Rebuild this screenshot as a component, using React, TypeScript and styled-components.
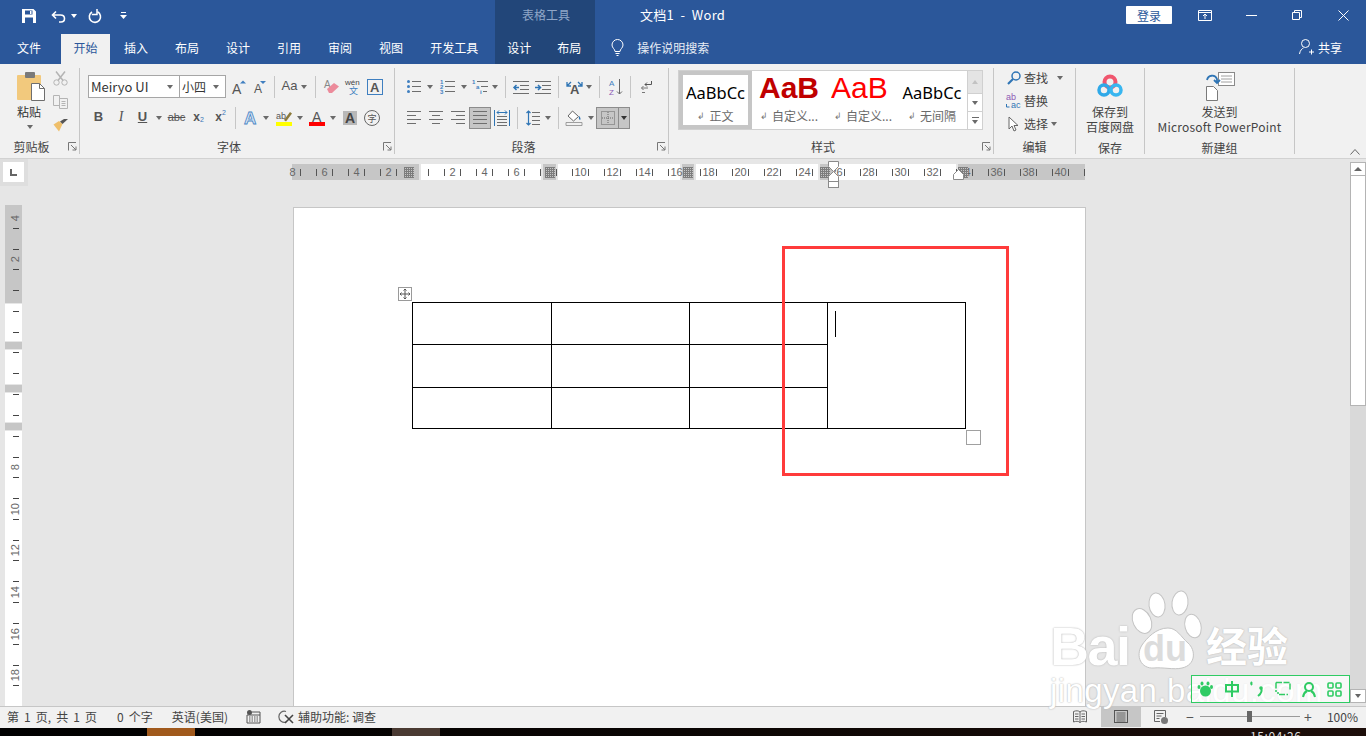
import React from "react"
import styled, { createGlobalStyle } from "styled-components"

const GlobalStyle = createGlobalStyle`
	html, body { margin: 0; padding: 0; background: #e6e6e6; overflow: hidden; }
	* { box-sizing: border-box; }
`

const Shell = styled.div`
	position: relative;
	width: 1366px;
	height: 736px;
	overflow: hidden;
	display: flex;
	flex-direction: column;
	font-family: "Noto Sans CJK SC", "Noto Sans", sans-serif;
	font-size: 12px;
	color: #444;
`

/* ---- title bar + tabs ---- */
const TitleBar = styled.div`
	display: flex;
	align-items: stretch;
	height: 34px;
	background: #2b579a;
	color: #fff;
`
const Qat = styled.div`
	width: 495px;
	display: flex;
	align-items: center;
	padding: 0 0 2px 22px;
`
const ContextTitle = styled.div`
	width: 100px;
	background: #224679;
	color: #8fa6c8;
	display: flex;
	align-items: center;
	justify-content: center;
	padding: 0 0 6px 2px;
`
const DocTitle = styled.div`
	margin-left: 45px;
	display: flex;
	align-items: center;
	padding-bottom: 6px;
	white-space: pre;
	font-size: 13px;
	letter-spacing: 0.3px;
`
const WindowControls = styled.div`
	margin-left: auto;
	display: flex;
	align-items: center;
	padding: 0 17px 4px 0;
`
const SignIn = styled.div`
	width: 46px;
	height: 18px;
	background: #fff;
	color: #2b579a;
	border-radius: 1px;
	display: flex;
	align-items: center;
	justify-content: center;
	margin-right: 26px;
`
const TabBar = styled.div`
	display: flex;
	align-items: stretch;
	height: 30px;
	background: #2b579a;
	color: #fff;
	padding-left: 4px;
`
const Tab = styled.div<{ $active?: boolean; $ml?: number; $pad?: number }>`
	display: flex;
	align-items: center;
	padding: 0 ${p => p.$pad ?? 13}px 4px;
	margin-left: ${p => p.$ml ?? 1}px;
	background: ${p => (p.$active ? "#f1f1f1" : "transparent")};
	color: ${p => (p.$active ? "#2b579a" : "#fff")};
`
const ContextTabs = styled.div`
	display: flex;
	width: 100px;
	margin-left: 4px;
	background: #224679;
`
const TellMe = styled.div`
	display: flex;
	align-items: center;
	margin-left: 16px;
	padding-bottom: 4px;
	gap: 13px;
	color: #e8edf5;
`
const Share = styled.div`
	margin-left: auto;
	display: flex;
	align-items: center;
	gap: 4px;
	padding: 0 24px 4px 0;
`

/* ---- ribbon ---- */
const Ribbon = styled.div`
	display: flex;
	height: 95px;
	background: #f1f1f1;
	border-bottom: 1px solid #d2d2d2;
`
const Group = styled.div<{ $w: number }>`
	width: ${p => p.$w}px;
	flex: none;
	display: flex;
	flex-direction: column;
`
const GroupBody = styled.div<{ $pt: number; $pl: number }>`
	flex: 1;
	min-height: 0;
	padding: ${p => p.$pt}px 0 0 ${p => p.$pl}px;
`
const GroupFoot = styled.div`
	display: flex;
	align-items: center;
	height: 20px;
	margin-bottom: 2px;
	flex: none;
`
const GroupLabel = styled.div`
	flex: 1;
	text-align: center;
	color: #444;
`
const Divider = styled.div`
	width: 1px;
	flex: none;
	margin: 4px 0;
	background: #c6c6c6;
`
const ToolRows = styled.div`
	display: flex;
	flex-direction: column;
	gap: 8px;
`
const ToolRow = styled.div`
	display: flex;
	align-items: center;
	height: 23px;
`
const Slot = styled.span<{ $ml?: number; $w?: number }>`
	display: inline-flex;
	align-items: center;
	justify-content: center;
	flex: none;
	margin-left: ${p => p.$ml ?? 0}px;
	${p => (p.$w ? `width: ${p.$w}px;` : "")}
`
const Arrow = styled.span<{ $ml?: number; $c?: string }>`
	flex: none;
	width: 0;
	height: 0;
	margin-left: ${p => p.$ml ?? 0}px;
	border-left: 3.5px solid transparent;
	border-right: 3.5px solid transparent;
	border-top: 4px solid ${p => p.$c ?? "#6a6a6a"};
`
const ToolSep = styled.span<{ $ml: number }>`
	flex: none;
	width: 1px;
	height: 22px;
	margin-left: ${p => p.$ml}px;
	background: #c6c6c6;
`
const Combo = styled.div<{ $w: number; $size?: number }>`
	width: ${p => p.$w}px;
	height: 23px;
	flex: none;
	display: flex;
	align-items: center;
	justify-content: space-between;
	background: #fff;
	border: 1px solid #a6a6a6;
	padding: 0 6px 0 2px;
	font-size: ${p => p.$size ?? 13}px;
	color: #333;
	& + & { margin-left: -1px; }
`
const ClipColumns = styled.div`
	display: flex;
`
const PasteCol = styled.div`
	width: 36px;
	display: flex;
	flex-direction: column;
	align-items: flex-start;
	color: #333;
`
const PasteText = styled.div`
	margin-top: 2px;
	line-height: 17px;
`
const PasteArrow = styled(Arrow)`
	margin: 5px 0 0 10px;
`
const ClipTools = styled.div`
	display: flex;
	flex-direction: column;
	gap: 9px;
`
const LetterTool = styled(Slot)<{ $font?: string; $size?: number; $bold?: boolean; $italic?: boolean; $under?: boolean; $strike?: boolean }>`
	font-family: ${p => p.$font ?? '"Liberation Sans"'}, sans-serif;
	font-size: ${p => p.$size ?? 13}px;
	font-weight: ${p => (p.$bold ? 700 : 400)};
	font-style: ${p => (p.$italic ? "italic" : "normal")};
	text-decoration: ${p => (p.$under ? "underline" : p.$strike ? "line-through" : "none")};
	color: #555;
	line-height: 14px;
	padding-bottom: 1px;
`
const Sub = styled.span<{ $sup?: boolean }>`
	font-size: 7px;
	font-weight: 400;
	color: #3b78b8;
	position: relative;
	top: ${p => (p.$sup ? -4 : 3)}px;
`
const PressedBox = styled(Slot)`
	height: 22px;
	background: #c6c6c6;
	border: 1px solid #8c8c8c;
`

/* styles gallery */
const Gallery = styled.div`
	display: flex;
	width: 305px;
	height: 60px;
	background: #fff;
	border: 1px solid #d0d0d0;
`
const StyleCard = styled.div<{ $selected?: boolean; $w: number }>`
	width: ${p => p.$w}px;
	flex: none;
	overflow: hidden;
	display: flex;
	flex-direction: column;
	align-items: center;
	border: ${p => (p.$selected ? "4px solid #c6c6c6" : "0")};
	padding-top: ${p => (p.$selected ? 1 : 5)}px;
`
const StylePreview = styled.div<{ $size: number; $color?: string; $bold?: boolean; $font?: string; $lift?: number }>`
	height: 32px;
	flex: none;
	display: flex;
	align-items: center;
	padding-bottom: ${p => p.$lift ?? 0}px;
	font-family: ${p => p.$font ?? '"Noto Sans"'}, sans-serif;
	font-size: ${p => p.$size}px;
	font-weight: ${p => (p.$bold ? 700 : 400)};
	color: ${p => p.$color ?? "#000"};
	white-space: nowrap;
`
const ClippedPreview = styled(StylePreview)`
	width: 58px;
	margin-left: -6px;
	overflow: hidden;
`
const StyleName = styled.div`
	height: 14px;
	flex: none;
	display: flex;
	align-items: center;
	gap: 4px;
	color: #6a6a6a;
	white-space: nowrap;
`
const ReturnMark = styled.span`
	font-size: 9px;
	color: #777;
`
const GalleryScroll = styled.div`
	width: 15px;
	flex: none;
	margin-left: auto;
	display: flex;
	flex-direction: column;
	border-left: 1px solid #d0d0d0;
`
const GalleryBtn = styled.div<{ $h: number; $off?: boolean }>`
	height: ${p => p.$h}px;
	display: flex;
	flex-direction: column;
	align-items: center;
	justify-content: center;
	gap: 2px;
	background: ${p => (p.$off ? "#e4e4e4" : "#fff")};
	& + & { border-top: 1px solid #d0d0d0; }
`
const UpArrow = styled.span<{ $c?: string; $w?: number }>`
	width: 0;
	height: 0;
	border-left: ${p => p.$w ?? 3.5}px solid transparent;
	border-right: ${p => p.$w ?? 3.5}px solid transparent;
	border-bottom: 4px solid ${p => p.$c ?? "#c2c2c2"};
`
const Dash = styled.span`
	width: 7px;
	height: 1px;
	background: #6a6a6a;
`

/* editing + big buttons */
const EditRow = styled.div`
	display: flex;
	align-items: center;
	height: 23px;
	color: #444;
`
const EditText = styled.span`
	margin-left: 3px;
`
const BigButton = styled.div<{ $mt: number; $iconGap: number }>`
	display: flex;
	flex-direction: column;
	align-items: center;
	padding-top: ${p => p.$mt}px;
	line-height: 15px;
	color: #444;
	& > svg { margin-bottom: ${p => p.$iconGap}px; }
`
const PptName = styled.span`
	letter-spacing: 0.2px;
	white-space: nowrap;
`
const Collapse = styled.div`
	flex: 1;
	display: flex;
	justify-content: flex-end;
	align-items: flex-end;
	padding: 0 6px 3px 0;
`

/* ---- workspace ---- */
const Workspace = styled.div`
	flex: 1;
	min-height: 0;
	display: flex;
	background: #e6e6e6;
`
const WorkMain = styled.div`
	width: 1350px;
	display: flex;
	flex-direction: column;
`
const RulerBar = styled.div`
	height: 48px;
	flex: none;
	display: flex;
	align-items: flex-start;
	position: relative;
	z-index: 1;
`
const TabStop = styled.div`
	width: 28px;
	height: 27px;
	background: #dedede;
	padding: 3px 4px 4px 3px;
`
const TabStopFace = styled.div`
	height: 100%;
	background: #fff;
	display: flex;
	align-items: center;
	justify-content: center;
`
const HRuler = styled.div`
	position: relative;
	width: 793px;
	height: 16px;
	margin: 5px 0 0 264px;
	display: flex;
	gap: 2px;
`
const RulerSeg = styled.div<{ $size: number; $dark?: boolean; $justify?: string }>`
	width: ${p => p.$size}px;
	flex: none;
	display: flex;
	align-items: center;
	justify-content: ${p => p.$justify ?? "center"};
	background: ${p => (p.$dark ? "#c6c6c6" : "#fff")};
`
const Stipple = styled.span`
	position: relative;
	z-index: 2;
	width: 10px;
	height: 11px;
	background-color: #c6c6c6;
	background-image: linear-gradient(#7d7d7d 1px, transparent 1px), linear-gradient(90deg, #7d7d7d 1px, transparent 1px);
	background-size: 2px 2px;
`
const HMarks = styled.div`
	position: absolute;
	left: -16px;
	top: 0;
	height: 16px;
	display: flex;
`
const HCell = styled.div`
	width: 32px;
	flex: none;
	display: grid;
	grid-template-columns: 8px 1px 1fr 1px 7px;
	align-items: center;
	font-family: "Liberation Sans", sans-serif;
	font-size: 11px;
	color: #666;
	text-align: center;
`
const HTick = styled.span<{ $off?: boolean }>`
	height: 7px;
	background: ${p => (p.$off ? "transparent" : "#555")};
`
const IndentMarker = styled.svg`
	position: absolute;
	top: -3px;
	z-index: 3;
`
const DocRow = styled.div`
	flex: 1;
	min-height: 0;
	display: flex;
`
const VRuler = styled.div`
	position: relative;
	width: 17px;
	margin: -2px 0 0 5px;
	flex: none;
	overflow: hidden;
	display: flex;
	flex-direction: column;
	gap: 1px;
`
const VSeg = styled.div<{ $size: number; $dark?: boolean }>`
	height: ${p => p.$size}px;
	flex: none;
	background: ${p => (p.$dark ? "#c6c6c6" : "#fff")};
`
const VMarks = styled.div`
	position: absolute;
	top: -8px;
	left: 0;
	width: 17px;
`
const VCell = styled.div`
	height: 41.6px;
	display: flex;
	flex-direction: column;
	align-items: center;
	justify-content: space-between;
	padding: 10px 0 10px 4px;
	font-family: "Liberation Sans", sans-serif;
	font-size: 11px;
	color: #666;
`
const VTick = styled.span<{ $off?: boolean }>`
	width: 6px;
	height: 1px;
	background: ${p => (p.$off ? "transparent" : "#444")};
`
const VLabel = styled.span`
	writing-mode: vertical-rl;
	transform: rotate(180deg);
	line-height: 11px;
	margin-left: -1px;
`
const Page = styled.div`
	position: relative;
	width: 793px;
	margin-left: 271px;
	background: #fff;
	border: 1px solid #c6c6c6;
	border-bottom: 0;
	padding: 94px 0 0 118px;
`
const TableWrap = styled.div`
	position: relative;
	width: 554px;
`
const Grid = styled.table`
	border-collapse: collapse;
	table-layout: fixed;
	width: 553px;
`
const GridCell = styled.td<{ $w: number }>`
	width: ${p => p.$w}px;
	border: 1px solid #000;
	padding: 8px 0 0 7px;
	vertical-align: top;
`
const GridRow = styled.tr<{ $h: number }>`
	height: ${p => p.$h}px;
`
const TextCaret = styled.div`
	width: 1px;
	height: 26px;
	background: #000;
`
const MoveHandle = styled.div`
	position: absolute;
	left: -14px;
	top: -15px;
	width: 14px;
	height: 14px;
	border: 1px solid #9a9a9a;
	background: #fff;
	display: flex;
	align-items: center;
	justify-content: center;
`
const ResizeHandle = styled.div`
	position: absolute;
	left: 554px;
	top: 128px;
	width: 15px;
	height: 15px;
	border: 1px solid #a0a0a0;
	background: #fff;
`
const Highlight = styled.div`
	position: absolute;
	left: 488px;
	top: 38px;
	width: 227px;
	height: 230px;
	border: 3px solid #ff3b3b;
`
const ScrollCol = styled.div`
	width: 16px;
	flex: none;
	display: flex;
	flex-direction: column;
	padding-top: 3px;
`
const ScrollBtn = styled.div`
	height: 14px;
	flex: none;
	background: #fff;
	border: 1px solid #b4b4b4;
	display: flex;
	align-items: center;
	justify-content: center;
`
const ScrollThumb = styled.div`
	height: 230px;
	flex: none;
	background: #fff;
	border: 1px solid #b4b4b4;
	border-top: 0;
`
const ScrollTrack = styled.div`
	flex: 1;
	background: #d9d9d9;
`
const ScrollDown = styled(ScrollBtn)`
	margin-bottom: 3px;
	height: 14px;
`
const DownArrow = styled(Arrow)`
	border-top-color: #666;
`

/* ---- status + taskbar ---- */
const StatusBar = styled.div`
	height: 22px;
	flex: none;
	display: flex;
	align-items: center;
	background: #f1f1f1;
	border-top: 1px solid #c6c6c6;
	padding: 0 0 2px 7px;
	color: #444;
`
const StatusItem = styled.span<{ $ml?: number; $spread?: boolean }>`
	display: inline-flex;
	align-items: center;
	margin-left: ${p => p.$ml ?? 0}px;
	white-space: pre;
	word-spacing: ${p => (p.$spread ? 2.4 : 0)}px;
`
const StatusRight = styled.div`
	margin-left: auto;
	height: 100%;
	display: flex;
	align-items: center;
	padding-right: 8px;
`
const ViewBtn = styled.div<{ $active?: boolean; $ml?: number }>`
	width: 40px;
	height: calc(100% + 2px);
	margin-left: ${p => p.$ml ?? 0}px;
	display: flex;
	align-items: center;
	justify-content: center;
	background: ${p => (p.$active ? "#c6c6c6" : "transparent")};
`
const ZoomTrack = styled.div`
	width: 100px;
	height: 1px;
	margin: 0 4px 0 6px;
	background: #9a9a9a;
	display: flex;
	align-items: center;
	justify-content: center;
`
const ZoomThumb = styled.div`
	width: 5px;
	height: 11px;
	background: #666;
`
const ZoomSign = styled.span`
	font-size: 14px;
	line-height: 14px;
	color: #555;
	width: 8px;
	text-align: center;
`
const ZoomPct = styled.span`
	margin-left: 15px;
`
const TaskBar = styled.div`
	height: 8px;
	flex: none;
	display: flex;
	overflow: hidden;
	background: linear-gradient(90deg, #000 0%, #0a0503 50%, #1d0e0a 100%);
`
const TaskApp = styled.div<{ $ml: number; $bg: string }>`
	width: 48px;
	margin-left: ${p => p.$ml}px;
	background: ${p => p.$bg};
`
const Clock = styled.div`
	margin-left: 810px;
	padding-top: 1px;
	line-height: 14px;
	color: #ddd;
	letter-spacing: 0.6px;
`

/* ---- overlays ---- */
const Watermark = styled.div`
	position: absolute;
	left: 1050px;
	top: 588px;
	width: 246px;
	color: #fff;
	font-family: "Liberation Sans", sans-serif;
	text-shadow: 0 0 2px #b9b9b9, 0 0 1px #c9c9c9;
	pointer-events: none;
`
const MarkTop = styled.div`
	display: flex;
	align-items: flex-end;
	height: 84px;
`
const MarkBai = styled.span`
	font-size: 54px;
	font-weight: 700;
	line-height: 60px;
	width: 80px;
	letter-spacing: -1.5px;
	margin-bottom: -4px;
`
const MarkPaw = styled.div`
	position: relative;
	width: 76px;
	height: 84px;
	flex: none;
`
const MarkDu = styled.span`
	position: absolute;
	left: 13px;
	bottom: 3px;
	font-size: 36px;
	font-weight: 700;
	line-height: 40px;
	color: #dcdcdc;
	text-shadow: none;
`
const MarkCn = styled.span`
	font-family: "Noto Sans CJK SC", sans-serif;
	font-size: 41px;
	font-weight: 700;
	line-height: 56px;
	white-space: nowrap;
`
const MarkUrl = styled.div`
	font-size: 33px;
	line-height: 36px;
	margin-top: 1px;
	white-space: nowrap;
	letter-spacing: 0.4px;
`
const ImeBar = styled.div`
	position: absolute;
	left: 1191px;
	top: 675px;
	width: 159px;
	height: 28px;
	background: rgba(255, 255, 255, 0.72);
	border: 1px solid #2fcb63;
	display: flex;
	align-items: center;
	padding-left: 5px;
`

const Svg = styled.svg`
	display: block;
	flex: none;
	overflow: visible;
`

type IcoProps = { w: number; h: number; children: React.ReactNode }
const Ico = ({ w, h, children }: IcoProps) => (
	<Svg width={w} height={h} viewBox={`0 0 ${w} ${h}`} fill="none">{children}</Svg>
)

const Launcher = () => (
	<Slot $ml={5}>
		<Ico w={11} h={9}>
			<path d="M.5 8.5V.5H8M3 3l5 5M8 4.5V8H4.500" stroke="#777" />
		</Ico>
	</Slot>
)

const LineIcon = ({ rows, w = 14 }: { rows: [number, number][]; w?: number }) => (
	<Ico w={w} h={rows.length * 4}>
		{rows.map(([x, len], i) => <rect key={i} x={x} y={i * 4 + 1} width={len} height={1} fill="#6e6e6e" />)}
	</Ico>
)

const AlignLeft = () => <LineIcon rows={[[0, 14], [0, 9], [0, 14], [0, 9]]} />
const AlignCenter = () => <LineIcon rows={[[0, 14], [3, 8], [0, 14], [3, 8]]} />
const AlignRight = () => <LineIcon rows={[[0, 14], [5, 9], [0, 14], [5, 9]]} />
const AlignJustify = () => <LineIcon rows={[[0, 14], [0, 14], [0, 14], [0, 14]]} />

const Bullets = () => (
	<Ico w={14} h={14}>
		{[1, 6, 11].map(y => <React.Fragment key={y}><circle cx={1.500} cy={y + .5} r={1.500} fill="#3f7fc0" /><rect x={5} y={y} width={9} height={1} fill="#6e6e6e" /></React.Fragment>)}
	</Ico>
)
const Numbers = () => (
	<Ico w={15} h={15}>
		{[0, 5, 10].map((y, i) => <React.Fragment key={y}><text x={0} y={y + 5} fontSize={6} fontWeight={700} fontFamily="Liberation Sans" fill="#3f7fc0">{i + 1}</text><rect x={5} y={y + 2} width={10} height={1} fill="#6e6e6e" /></React.Fragment>)}
	</Ico>
)
const MultiList = () => (
	<Ico w={16} h={15}>
		<text x={0} y={5} fontSize={6} fontWeight={700} fontFamily="Liberation Sans" fill="#3f7fc0">1</text>
		<rect x={5} y={2} width={11} height={1} fill="#6e6e6e" />
		<text x={4} y={10} fontSize={6} fontWeight={700} fontFamily="Liberation Sans" fill="#3f7fc0">a</text>
		<rect x={9} y={7} width={7} height={1} fill="#6e6e6e" />
		<text x={8} y={15} fontSize={6} fontWeight={700} fontFamily="Liberation Sans" fill="#3f7fc0">i</text>
		<rect x={11} y={12} width={4} height={1} fill="#6e6e6e" />
	</Ico>
)
const Indent = ({ out }: { out?: boolean }) => (
	<Ico w={16} h={14}>
		{[1, 5, 9, 13].map((y, i) => <rect key={y} x={i === 1 || i === 2 ? 7 : 0} y={y} width={i === 1 || i === 2 ? 9 : 16} height={1} fill="#6e6e6e" />)}
		<path d={out ? "M6 7.500H1M3.500 5L1 7.500 3.500 10" : "M0 7.500h5M3 5l2.500 2.500L3 10"} stroke="#2f75b5" strokeWidth={1.500} />
	</Ico>
)

export default function App() {
	const hMarks = ["8", "6", "4", "2", "", "2", "4", "6", "", "10", "12", "14", "16", "18", "20", "22", "24", "26", "28", "30", "32", "34", "36", "38", "40", ""]
	const vMarks = ["4", "2", "", "", "", "", "8", "10", "12", "14", "16", "18", "20"]

	return (
		<Shell>
			<GlobalStyle />

			<TitleBar>
				<Qat>
					<Ico w={14} h={14}>
						<path fillRule="evenodd" d="M0 0h11.500L14 2.500V14H0zM3 1.500v4h7.500v-4zM3 8.500V14h8V8.500zM8 2h1.500v3H8z" fill="#fff" />
					</Ico>
					<Slot $ml={15}>
						<Ico w={15} h={13}>
							<path d="M5 1.500L1.500 5 5 8.500M2 5h7.500c2.500 0 4 1.500 4 3.500S12 12 10 12H8" stroke="#fff" strokeWidth={1.600} />
						</Ico>
					</Slot>
					<Arrow $ml={5} $c="#fff" />
					<Slot $ml={11}>
						<Ico w={14} h={15}>
							<path d="M9.500 2.800A5.600 5.600 0 1 1 4 3" stroke="#fff" strokeWidth={1.600} />
							<path d="M9 0v5.500H3.800" stroke="#fff" strokeWidth={1.500} />
						</Ico>
					</Slot>
					<Slot $ml={18}>
						<Ico w={7} h={8}>
							<rect x={1} y={0} width={5} height={1} fill="#fff" />
							<path d="M0 3h7L3.500 7z" fill="#fff" />
						</Ico>
					</Slot>
				</Qat>
				<ContextTitle>表格工具</ContextTitle>
				<DocTitle>文档1  -  Word</DocTitle>
				<WindowControls>
					<SignIn>登录</SignIn>
					<Ico w={14} h={11}>
						<path d="M.5.500h13v10H.5zM.5 2.500h13M7 9V4.500M5 6l2-2 2 2" stroke="#fff" />
					</Ico>
					<Slot $ml={34}>
						<Ico w={11} h={1}><rect width={11} height={1} fill="#fff" /></Ico>
					</Slot>
					<Slot $ml={35}>
						<Ico w={10} h={10}>
							<path d="M2.500 2.500V.5h7v7h-2M.5 2.500h7v7h-7z" stroke="#fff" />
						</Ico>
					</Slot>
					<Slot $ml={36}>
						<Ico w={11} h={11}>
							<path d="M.5.500l10 10M10.500.5l-10 10" stroke="#fff" />
						</Ico>
					</Slot>
				</WindowControls>
			</TitleBar>

			<TabBar>
				<Tab $ml={0}>文件</Tab>
				<Tab $active $ml={7} $pad={12.5}>开始</Tab>
				<Tab>插入</Tab>
				<Tab>布局</Tab>
				<Tab>设计</Tab>
				<Tab>引用</Tab>
				<Tab>审阅</Tab>
				<Tab>视图</Tab>
				<Tab>开发工具</Tab>
				<ContextTabs>
					<Tab $ml={0} $pad={12}>设计</Tab>
					<Tab $ml={1}>布局</Tab>
				</ContextTabs>
				<TellMe>
					<Ico w={13} h={17}>
						<path d="M4 12.500C4 10 1 9 1 6a5.500 5.500 0 0 1 11 0c0 3-3 4-3 6.500zM4.500 14.500h4M5.500 16.500h2" stroke="#fff" />
					</Ico>
					操作说明搜索
				</TellMe>
				<Share>
					<Ico w={15} h={16}>
						<circle cx={6.500} cy={4.500} r={4} stroke="#fff" />
						<path d="M.5 15c.5-3.500 2.500-5.500 4-6M10 13h5M12.500 10.500v5" stroke="#fff" />
					</Ico>
					共享
				</Share>
			</TabBar>

			<Ribbon>
				<Group $w={79}>
					<GroupBody $pt={7} $pl={17}>
						<ClipColumns>
							<PasteCol>
								<Ico w={28} h={30}>
									<rect x={0} y={4} width={24} height={25} rx={1} fill="#f2c97d" />
									<rect x={8} y={1} width={10} height={6} rx={1} fill="#7a7a7a" />
									<path d="M14.500 12.500h8l5 5v12h-13z" fill="#fff" stroke="#6e6e6e" />
									<path d="M22.500 12.500v5h5" stroke="#6e6e6e" />
								</Ico>
								<PasteText>粘贴</PasteText>
								<PasteArrow />
							</PasteCol>
							<ClipTools>
								<Ico w={15} h={15}>
									<path d="M3 .5l7 9M12 .5l-7 9" stroke="#b4b4b4" strokeWidth={1.500} />
									<circle cx={3.500} cy={11.500} r={2.700} stroke="#b4b4b4" />
									<circle cx={11.500} cy={11.500} r={2.700} stroke="#b4b4b4" />
								</Ico>
								<Ico w={15} h={14}>
									<path d="M.5.500h6v10h-6zM6.500 3.500h8v10h-8z" fill="#f1f1f1" stroke="#b4b4b4" />
									<path d="M8.500 6.500h4M8.500 8.500h4M8.500 10.500h4" stroke="#b4b4b4" />
								</Ico>
								<Ico w={16} h={14}>
									<path d="M9.500 6L6 3 .5 6.500 6 13.500z" fill="#efbf6a" />
									<path d="M7 3.500L11 1l4 0-5.500 5z" fill="#555" />
								</Ico>
							</ClipTools>
						</ClipColumns>
					</GroupBody>
					<GroupFoot><GroupLabel>剪贴板</GroupLabel><Launcher /></GroupFoot>
				</Group>
				<Divider />

				<Group $w={314}>
					<GroupBody $pt={11} $pl={8}>
						<ToolRows>
							<ToolRow>
								<Combo $w={92}><span>Meiryo UI</span><Arrow /></Combo>
								<Combo $w={47} $size={12}><span>小四</span><Arrow /></Combo>
								<Slot $ml={6}>
									<Ico w={14} h={14}>
										<text x={0} y={14} fontSize={14} fontFamily="Liberation Sans" fill="#555">A</text>
										<path d="M8 3.500h6L11 .5z" fill="#3f7fc0" />
									</Ico>
								</Slot>
								<Slot $ml={8}>
									<Ico w={12} h={13}>
										<text x={0} y={13} fontSize={12} fontFamily="Liberation Sans" fill="#555">A</text>
										<path d="M6 1h6L9 4z" fill="#3f7fc0" />
									</Ico>
								</Slot>
								<ToolSep $ml={8} />
								<LetterTool $ml={7} $w={15} $size={13}>Aa</LetterTool>
								<Arrow $ml={4} />
								<ToolSep $ml={8} />
								<Slot $ml={8}>
									<Ico w={15} h={15}>
										<text x={0} y={9} fontSize={10} fontFamily="Liberation Sans" fill="#888">A</text>
										<path d="M3 10l7-6 5 3.500-7 6.500H5z" fill="#ec8b9b" />
									</Ico>
								</Slot>
								<Slot $ml={6}>
									<Ico w={16} h={17}>
										<text x={0} y={7} fontSize={8} fontFamily="Liberation Sans" fill="#444">wén</text>
										<text x={4} y={16} fontSize={9} fontFamily="Noto Sans CJK SC" fill="#3f7fc0">文</text>
									</Ico>
								</Slot>
								<Slot $ml={6}>
									<Ico w={16} h={16}>
										<rect x={.5} y={.5} width={15} height={15} stroke="#3f7fc0" />
										<text x={3} y={13} fontSize={13} fontWeight={700} fontFamily="Liberation Sans" fill="#555">A</text>
									</Ico>
								</Slot>
							</ToolRow>
							<ToolRow>
								<LetterTool $ml={6} $w={9} $bold>B</LetterTool>
								<LetterTool $ml={14} $w={8} $italic $font='"Liberation Serif"' $size={14}>I</LetterTool>
								<LetterTool $ml={13} $w={9} $bold $under>U</LetterTool>
								<Arrow $ml={9} />
								<LetterTool $ml={6} $w={17} $size={11} $strike>abc</LetterTool>
								<LetterTool $ml={7} $w={13} $bold $size={12}>x<Sub>2</Sub></LetterTool>
								<LetterTool $ml={9} $w={13} $bold $size={12}>x<Sub $sup>2</Sub></LetterTool>
								<ToolSep $ml={8} />
								<Slot $ml={9}>
									<Ico w={14} h={15}>
										<text x={-1} y={14} fontSize={17} fontWeight={700} fontFamily="Liberation Sans" fill="#dbe8f6" stroke="#4a86c5" strokeWidth={.8}>A</text>
									</Ico>
								</Slot>
								<Arrow $ml={4} />
								<Slot $ml={7}>
									<Ico w={16} h={16}>
										<text x={0} y={9} fontSize={9} fontFamily="Liberation Sans" fill="#555">ab</text>
										<path d="M8 10l6-8 2 1.500-6 8z" fill="#8c7a3a" />
										<rect x={0} y={12} width={16} height={4} fill="#ffff00" />
									</Ico>
								</Slot>
								<Arrow $ml={5} />
								<Slot $ml={6}>
									<Ico w={16} h={16}>
										<text x={3} y={12} fontSize={14} fontFamily="Liberation Sans" fill="#555">A</text>
										<rect x={0} y={12} width={16} height={4} fill="#ff0000" />
									</Ico>
								</Slot>
								<Arrow $ml={5} />
								<Slot $ml={7}>
									<Ico w={14} h={14}>
										<rect width={14} height={14} fill="#b8b8b8" />
										<text x={2} y={12} fontSize={14} fontWeight={700} fontFamily="Liberation Sans" fill="#444">A</text>
									</Ico>
								</Slot>
								<Slot $ml={7}>
									<Ico w={16} h={16}>
										<circle cx={8} cy={8} r={7.500} stroke="#666" />
										<text x={3.500} y={11.500} fontSize={9} fontFamily="Noto Sans CJK SC" fill="#555">字</text>
									</Ico>
								</Slot>
							</ToolRow>
						</ToolRows>
					</GroupBody>
					<GroupFoot><GroupLabel>字体</GroupLabel><Launcher /></GroupFoot>
				</Group>
				<Divider />

				<Group $w={273}>
					<GroupBody $pt={11} $pl={12}>
						<ToolRows>
							<ToolRow>
								<Bullets />
								<Arrow $ml={6} />
								<Slot $ml={7}><Numbers /></Slot>
								<Arrow $ml={6} />
								<Slot $ml={5}><MultiList /></Slot>
								<Arrow $ml={4} />
								<ToolSep $ml={7} />
								<Slot $ml={7}><Indent out /></Slot>
								<Slot $ml={6}><Indent /></Slot>
								<ToolSep $ml={7} />
								<Slot $ml={7}>
									<Ico w={17} h={14}>
										<text x={4} y={14} fontSize={13} fontWeight={700} fontFamily="Liberation Sans" fill="#555">A</text>
										<path d="M1 6L5 2M1 2v4h4M16 6l-4-4M16 2v4h-4" stroke="#2f75b5" strokeWidth={1.300} />
									</Ico>
								</Slot>
								<Arrow $ml={3} />
								<ToolSep $ml={7} />
								<Slot $ml={8}>
									<Ico w={15} h={16}>
										<text x={1} y={7} fontSize={8} fontFamily="Liberation Sans" fill="#3f7fc0">A</text>
										<text x={1} y={15.500} fontSize={8} fontFamily="Liberation Sans" fill="#8e5ab5">Z</text>
										<path d="M11.500 0v15M9 12.500l2.500 2.500 2.500-2.500" stroke="#666" />
									</Ico>
								</Slot>
								<ToolSep $ml={7} />
								<Slot $ml={10}>
									<Ico w={11} h={13}>
										<path d="M10.500 1v3.500H4M6 2.500L4 4.500l2 2" stroke="#555" />
										<path d="M7 8H.5M2.500 6L.5 8l2 2M1 12.500h3" stroke="#777" />
									</Ico>
								</Slot>
							</ToolRow>
							<ToolRow>
								<AlignLeft />
								<Slot $ml={8}><AlignCenter /></Slot>
								<Slot $ml={8}><AlignRight /></Slot>
								<PressedBox $ml={4} $w={22}><AlignJustify /></PressedBox>
								<Slot $ml={3}>
									<Ico w={16} h={16}>
										<path d="M.5 0v16M15.500 0v16" stroke="#2f75b5" />
										<path d="M3 2.500h10M5 .5L3 2.500l2 2M11 .5l2 2-2 2" stroke="#2f75b5" />
										{[6, 9, 12, 15].map(y => <rect key={y} x={3} y={y} width={10} height={1} fill="#6e6e6e" />)}
									</Ico>
								</Slot>
								<ToolSep $ml={7} />
								<Slot $ml={8}>
									<Ico w={14} h={16}>
										{[2, 6, 10, 14].map(y => <rect key={y} x={6} y={y} width={8} height={1} fill="#6e6e6e" />)}
										<path d="M2.500 1v14M.5 3l2-2 2 2M.5 13l2 2 2-2" stroke="#2f75b5" strokeWidth={1.200} />
									</Ico>
								</Slot>
								<Arrow $ml={5} />
								<ToolSep $ml={7} />
								<Slot $ml={7}>
									<Ico w={16} h={16}>
										<path d="M6.500 1l6 5.500-5 4.500-5.500-5z" fill="#fff" stroke="#666" />
										<path d="M13 6c1.500 1.500 2 3 1 4-1-.5-1.500-2-1-4z" fill="#2f75b5" />
										<path d="M0 12.500h16v3H0z" fill="#f1f1f1" stroke="#8a8a8a" strokeWidth={.8} />
									</Ico>
								</Slot>
								<Arrow $ml={6} />
								<PressedBox $ml={2} $w={23}>
									<Ico w={14} h={14}>
										<path d="M.5.500h13v13H.5zM7 1v12M1 7h12" stroke="#666" strokeDasharray="1 1" />
									</Ico>
								</PressedBox>
								<PressedBox $ml={-1} $w={12}><Arrow $c="#333" /></PressedBox>
							</ToolRow>
						</ToolRows>
					</GroupBody>
					<GroupFoot><GroupLabel>段落</GroupLabel><Launcher /></GroupFoot>
				</Group>
				<Divider />

				<Group $w={324}>
					<GroupBody $pt={6} $pl={9}>
						<Gallery>
							<StyleCard $selected $w={73}>
								<StylePreview $size={16.5}>AaBbCc</StylePreview>
								<StyleName><ReturnMark>↲</ReturnMark>正文</StyleName>
							</StyleCard>
							<StyleCard $w={74}>
								<StylePreview $size={30} $color="#c00000" $bold $font='"Liberation Sans"' $lift={8}>AaB</StylePreview>
								<StyleName><ReturnMark>↲</ReturnMark>自定义...</StyleName>
							</StyleCard>
							<StyleCard $w={74}>
								<ClippedPreview $size={30} $color="#ff0000" $font='"Liberation Sans"' $lift={8}>AaBb</ClippedPreview>
								<StyleName><ReturnMark>↲</ReturnMark>自定义...</StyleName>
							</StyleCard>
							<StyleCard $w={64}>
								<StylePreview $size={16.5}>AaBbCc</StylePreview>
								<StyleName><ReturnMark>↲</ReturnMark>无间隔</StyleName>
							</StyleCard>
							<GalleryScroll>
								<GalleryBtn $h={22} $off><UpArrow /></GalleryBtn>
								<GalleryBtn $h={18}><Arrow /></GalleryBtn>
								<GalleryBtn $h={18}><Dash /><Arrow /></GalleryBtn>
							</GalleryScroll>
						</Gallery>
					</GroupBody>
					<GroupFoot><GroupLabel>样式</GroupLabel><Launcher /></GroupFoot>
				</Group>
				<Divider />

				<Group $w={81}>
					<GroupBody $pt={2} $pl={12}>
						<EditRow>
							<Slot $w={15}>
								<Ico w={14} h={14}>
									<circle cx={9} cy={5} r={4} stroke="#2f75b5" strokeWidth={1.500} />
									<path d="M6 8l-5 5" stroke="#2f75b5" strokeWidth={2.200} />
								</Ico>
							</Slot>
							<EditText>查找</EditText>
							<Arrow $ml={9} />
						</EditRow>
						<EditRow>
							<Slot $w={15}>
								<Ico w={16} h={16}>
									<text x={0} y={7} fontSize={9} fontFamily="Liberation Sans" fill="#8e5ab5">ab</text>
									<text x={5} y={15} fontSize={9} fontFamily="Liberation Sans" fill="#2f75b5">ac</text>
									<path d="M.5 11v3h3" stroke="#2f75b5" />
								</Ico>
							</Slot>
							<EditText>替换</EditText>
						</EditRow>
						<EditRow>
							<Slot $w={15}>
								<Ico w={11} h={16}>
									<path d="M1 1v12l3-3 2 5 2-1-2-4.500h4z" fill="#fff" stroke="#666" />
								</Ico>
							</Slot>
							<EditText>选择</EditText>
							<Arrow $ml={3} />
						</EditRow>
					</GroupBody>
					<GroupFoot><GroupLabel>编辑</GroupLabel></GroupFoot>
				</Group>
				<Divider />

				<Group $w={68}>
					<BigButton $mt={11} $iconGap={7}>
						<Ico w={26} h={22}>
							<circle cx={13} cy={7} r={5.500} stroke="#f0566e" strokeWidth={4} />
							<circle cx={7} cy={15} r={5} stroke="#2fa9e8" strokeWidth={3.500} />
							<circle cx={19} cy={15} r={5} stroke="#38b6f0" strokeWidth={3.500} />
						</Ico>
						保存到
						<span>百度网盘</span>
					</BigButton>
					<Collapse />
					<GroupFoot><GroupLabel>保存</GroupLabel></GroupFoot>
				</Group>
				<Divider />

				<Group $w={149}>
					<BigButton $mt={8} $iconGap={-1}>
						<Ico w={30} h={33}>
							<rect x={13.500} y={.5} width={16} height={13} fill="#fff" stroke="#8a8a8a" />
							<path d="M16 4h11M16 7h11M16 10h11" stroke="#a0a0a0" />
							<path d="M2 8c1-5 8-6 10-1v3M9 8l3 3 3-3" stroke="#2f75b5" strokeWidth={1.800} />
							<path d="M1.500 14.500h7l4 4v10h-11z" fill="#fff" stroke="#7a7a7a" />
						</Ico>
						发送到
						<PptName>Microsoft PowerPoint</PptName>
					</BigButton>
					<Collapse />
					<GroupFoot><GroupLabel>新建组</GroupLabel></GroupFoot>
				</Group>
				<Divider />

				<Collapse>
					<Ico w={10} h={6}>
						<path d="M.5 5.500l4.500-5 4.500 5" stroke="#666" />
					</Ico>
				</Collapse>
			</Ribbon>

			<Workspace>
				<WorkMain>
					<RulerBar>
						<TabStop>
							<TabStopFace>
								<Ico w={7} h={7}>
									<path d="M0 0h2v5h5v2H0z" fill="#666" />
								</Ico>
							</TabStopFace>
						</TabStop>
						<HRuler>
							<RulerSeg $size={127} $dark $justify="flex-end"><Stipple />&nbsp;&nbsp;</RulerSeg>
							<RulerSeg $size={120} />
							<RulerSeg $size={13} $dark><Stipple /></RulerSeg>
							<RulerSeg $size={122} />
							<RulerSeg $size={12} $dark><Stipple /></RulerSeg>
							<RulerSeg $size={122} />
							<RulerSeg $size={14} $dark $justify="flex-start"><Stipple /></RulerSeg>
							<RulerSeg $size={120} />
							<RulerSeg $size={127} $dark $justify="flex-start"><Stipple /></RulerSeg>
							<HMarks>
								{hMarks.map((label, i) => (
									<HCell key={i}>
										<span />
										<HTick $off={i === 0} />
										<span>{label}</span>
										<HTick $off={i === hMarks.length - 1} />
									</HCell>
								))}
							</HMarks>
							<IndentMarker width={12} height={28} viewBox="0 0 12 28" style={{ left: 536 }}>
								<path d="M.5.500h10v5L5.500 10.500.5 5.500z" fill="#fff" stroke="#8a8a8a" />
								<path d="M5.500 10.500l5 5v5H.5v-5z" fill="#fff" stroke="#8a8a8a" />
								<rect x={.5} y={20.500} width={10} height={6} fill="#fff" stroke="#8a8a8a" />
							</IndentMarker>
							<IndentMarker width={12} height={22} viewBox="0 0 12 22" style={{ left: 661, top: 4 }}>
								<path d="M.5 11.500v-5l5-5 5 5v5z" fill="#fff" stroke="#8a8a8a" />
							</IndentMarker>
						</HRuler>
					</RulerBar>
					<DocRow>
						<VRuler>
							<VSeg $size={98} $dark />
							<VSeg $size={37} />
							<VSeg $size={7} $dark />
							<VSeg $size={34} />
							<VSeg $size={7} $dark />
							<VSeg $size={29} />
							<VSeg $size={7} $dark />
							<VSeg $size={300} />
							<VMarks>
								{vMarks.map((label, i) => (
									<VCell key={i}>
										<VTick $off={i === 0} />
										<VLabel>{label}</VLabel>
										<VTick />
									</VCell>
								))}
							</VMarks>
						</VRuler>
						<Page>
							<TableWrap>
								<MoveHandle>
									<Ico w={10} h={10}>
										<path d="M5 0v10M0 5h10M3.500 1.500L5 0l1.500 1.500M3.500 8.500L5 10l1.500-1.500M1.500 3.500L0 5l1.500 1.500M8.500 3.500L10 5 8.500 6.500" stroke="#555" />
									</Ico>
								</MoveHandle>
								<Grid>
									<tbody>
										<GridRow $h={42}>
											<GridCell $w={139} />
											<GridCell $w={138} />
											<GridCell $w={138} />
											<GridCell $w={138} rowSpan={3}><TextCaret /></GridCell>
										</GridRow>
										<GridRow $h={43}>
											<GridCell $w={139} />
											<GridCell $w={138} />
											<GridCell $w={138} />
										</GridRow>
										<GridRow $h={41}>
											<GridCell $w={139} />
											<GridCell $w={138} />
											<GridCell $w={138} />
										</GridRow>
									</tbody>
								</Grid>
								<ResizeHandle />
							</TableWrap>
							<Highlight />
						</Page>
					</DocRow>
				</WorkMain>
				<ScrollCol>
					<ScrollBtn><UpArrow $c="#666" $w={4} /></ScrollBtn>
					<ScrollThumb />
					<ScrollTrack />
					<ScrollDown><DownArrow /></ScrollDown>
				</ScrollCol>
			</Workspace>

			<StatusBar>
				<StatusItem $spread>第 1 页, 共 1 页</StatusItem>
				<StatusItem $ml={20} $spread>0 个字</StatusItem>
				<StatusItem $ml={19}>英语(美国)</StatusItem>
				<StatusItem $ml={19}>
					<Ico w={13} h={13}>
						<circle cx={2.500} cy={2.500} r={2.500} fill="#555" />
						<path d="M5 2h8v11H0V5h13" fill="#f1f1f1" stroke="#555" />
						<path d="M2 7h9M2 9h9M2 11h9" stroke="#555" strokeDasharray="1.500 1" />
					</Ico>
				</StatusItem>
				<StatusItem $ml={18}>
					<Ico w={17} h={14}>
						<path d="M8 1.500A5.500 5.500 0 1 0 8 12" stroke="#666" strokeWidth={1.200} />
						<path d="M7 5l8 8M15 5l-8 8" stroke="#444" strokeWidth={1.600} />
					</Ico>
				</StatusItem>
				<StatusItem $ml={3}>辅助功能: 调查</StatusItem>
				<StatusRight>
					<Ico w={14} h={13}>
						<path d="M.5 1.500C3 .5 5.500.5 7 2c1.500-1.500 4-1.500 6.500-.5v10.500C11 11 8.500 11 7 12.500 5.500 11 3 11 .5 12zM7 2v10.500M2 4h3.500M2 6.500h3.500M2 9h3.500M8.500 4H12M8.500 6.500H12M8.500 9H12" stroke="#666" />
					</Ico>
					<ViewBtn $active $ml={14}>
						<Ico w={14} h={13}>
							<rect x={.5} y={.5} width={13} height={12} stroke="#555" />
							<path d="M2.500 3h9M2.500 5h9M2.500 7h9M2.500 9h9M2.500 11h9" stroke="#666" />
						</Ico>
					</ViewBtn>
					<Slot $ml={13}>
						<Ico w={14} h={14}>
							<path d="M.5.500h11V7M.5.500v11H6M2.500 3.500h7M2.500 6h5M2.500 8.500h3" stroke="#666" />
							<circle cx={10.500} cy={10.500} r={3.500} fill="#777" />
						</Ico>
					</Slot>
					<Slot $ml={18}><ZoomSign>−</ZoomSign></Slot>
					<ZoomTrack><ZoomThumb /></ZoomTrack>
					<ZoomSign>+</ZoomSign>
					<ZoomPct>100%</ZoomPct>
				</StatusRight>
			</StatusBar>
			<TaskBar>
				<TaskApp $ml={147} $bg="#a0591c" />
				<TaskApp $ml={197} $bg="#4a3a32" />
				<Clock>15:04:26</Clock>
			</TaskBar>

			<Watermark>
				<MarkTop>
					<MarkBai>Bai</MarkBai>
					<MarkPaw>
						<Ico w={76} h={84}>
							<g fill="#fff" stroke="#c4c4c4" strokeWidth={1}>
								<ellipse cx={27} cy={17} rx={8} ry={12} transform="rotate(-8 27 17)" />
								<ellipse cx={50} cy={15} rx={8} ry={12} transform="rotate(8 50 15)" />
								<ellipse cx={12} cy={33} rx={9} ry={13} transform="rotate(-25 12 33)" />
								<ellipse cx={63} cy={38} rx={8} ry={12} transform="rotate(-15 63 38)" />
								<path d="M38 40c9 0 13 9 20 15 8 7 8 22-6 25-8 2-20-1-28 0-13 1-19-12-12-23 5-7 14-17 26-17z" />
							</g>
						</Ico>
						<MarkDu>du</MarkDu>
					</MarkPaw>
					<MarkCn>经验</MarkCn>
				</MarkTop>
				<MarkUrl>jingyan.baidu.com</MarkUrl>
			</Watermark>

			<ImeBar>
				<Ico w={17} h={16}>
					<g fill="#2fcb63">
						<ellipse cx={5} cy={2.500} rx={1.500} ry={2} />
						<ellipse cx={11} cy={2.500} rx={1.500} ry={2} />
						<ellipse cx={2} cy={6} rx={1.500} ry={2} />
						<ellipse cx={14.500} cy={6} rx={1.500} ry={2} />
						<circle cx={8.500} cy={10} r={5.500} />
					</g>
				</Ico>
				<Slot $ml={11}>
					<Ico w={14} h={16}>
						<path d="M1 4h12v6.500H1zM7 0v16" stroke="#2fcb63" strokeWidth={2} />
					</Ico>
				</Slot>
				<Slot $ml={11}>
					<Ico w={14} h={16}>
						<path d="M2 1C1 2 1 3 2 4M11 7c1 2 1 5-3 8" stroke="#2fcb63" strokeWidth={2} />
						<circle cx={11} cy={7} r={1.800} fill="#2fcb63" />
					</Ico>
				</Slot>
				<Slot $ml={11}>
					<Ico w={16} h={16}>
						<path d="M1 1.500h14V10M1 1.500V11M4 13.500h9M9 13.500h-5" stroke="#2fcb63" strokeWidth={1.500} strokeDasharray="6 1.500" />
						<circle cx={3} cy={12} r={1} fill="#2fcb63" />
					</Ico>
				</Slot>
				<Slot $ml={11}>
					<Ico w={14} h={15}>
						<circle cx={7} cy={5} r={4} stroke="#2fcb63" strokeWidth={2} />
						<path d="M1 15c.5-3 2-5 4-6M13 15c-.5-3-2-5-4-6" stroke="#2fcb63" strokeWidth={2} />
					</Ico>
				</Slot>
				<Slot $ml={11}>
					<Ico w={15} h={15}>
						{[[1, 1], [9, 1], [1, 9], [9, 9]].map(([x, y]) => <rect key={`${x}${y}`} x={x} y={y} width={5} height={5} rx={1} stroke="#2fcb63" strokeWidth={1.600} />)}
					</Ico>
				</Slot>
			</ImeBar>
		</Shell>
	)
}
